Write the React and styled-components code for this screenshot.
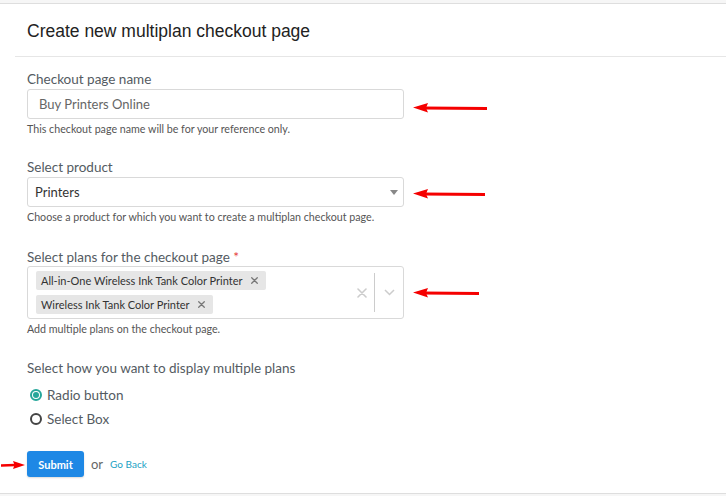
import React from 'react';
import styled, { createGlobalStyle } from 'styled-components';

const GlobalStyle = createGlobalStyle`
    html, body {
        margin: 0;
        padding: 0;
        background: #f6f6f6;
    }
    * { box-sizing: border-box; }
`;

const RedArrow = ({ width = 74 }) => (
    <svg width={width} height="12" viewBox={`0 0 ${width} 12`}>
        <line x1="10" y1="6" x2={width} y2="6.6" stroke="#f50000" strokeWidth="3" />
        <polygon points="0,5.5 15,1 13,6 15,10.5" fill="#f50000" />
    </svg>
);

const Caret = () => (
    <svg width="8" height="5" viewBox="0 0 8 5">
        <polygon points="0,0 8,0 4,5" fill="#888" />
    </svg>
);

const Cross = ({ size = 8, color = '#ccc', width = 1.6 }) => (
    <svg width={size} height={size} viewBox="0 0 10 10">
        <path d="M1 1 L9 9 M9 1 L1 9" stroke={color} strokeWidth={width} strokeLinecap="round" />
    </svg>
);

const Chevron = () => (
    <svg width="11" height="7" viewBox="0 0 11 7">
        <path d="M1 1 L5.5 5.5 L10 1" stroke="#ccc" strokeWidth="1.5" fill="none" />
    </svg>
);

export default function App() {
    return (
        <Page>
            <GlobalStyle />
            <Card>
                <Header>
                    <Title>Create new multiplan checkout page</Title>
                </Header>
                <Body>
                    <Field space={24}>
                        <Label>Checkout page name</Label>
                        <Row>
                            <Input>Buy Printers Online</Input>
                            <ArrowSlot offset={4}><RedArrow width={74} /></ArrowSlot>
                        </Row>
                        <Help>This checkout page name will be for your reference only.</Help>
                    </Field>

                    <Field space={26}>
                        <Label>Select product</Label>
                        <Row>
                            <Select>
                                <span>Printers</span>
                                <Caret />
                            </Select>
                            <ArrowSlot offset={2}><RedArrow width={72} /></ArrowSlot>
                        </Row>
                        <Help>Choose a product for which you want to create a multiplan checkout page.</Help>
                    </Field>

                    <Field space={25}>
                        <Label tight>Select plans for the checkout page <Required>*</Required></Label>
                        <Row>
                            <Multi>
                                <Tags>
                                    <Tag>All-in-One Wireless Ink Tank Color Printer <Cross size={7} color="#777" width={1.8} /></Tag>
                                    <Tag>Wireless Ink Tank Color Printer <Cross size={7} color="#777" width={1.8} /></Tag>
                                </Tags>
                                <Controls>
                                    <ClearBtn><Cross size={10} /></ClearBtn>
                                    <Divider />
                                    <ChevronBtn><Chevron /></ChevronBtn>
                                </Controls>
                            </Multi>
                            <ArrowSlot offset={0}><RedArrow width={66} /></ArrowSlot>
                        </Row>
                        <Help>Add multiple plans on the checkout page.</Help>
                    </Field>

                    <Field space={0}>
                        <Label>Select how you want to display multiple plans</Label>
                        <Radios>
                            <RadioRow>
                                <Radio checked />
                                Radio button
                            </RadioRow>
                            <RadioRow>
                                <Radio />
                                Select Box
                            </RadioRow>
                        </Radios>
                    </Field>

                    <Actions>
                        <SubmitWrap>
                            <SmallArrow>
                                <svg width="24" height="10" viewBox="0 0 24 10">
                                    <line x1="0" y1="5.5" x2="14" y2="5" stroke="#f50000" strokeWidth="2.4" />
                                    <polygon points="24,5 12,1 13.5,5 12,9" fill="#f50000" />
                                </svg>
                            </SmallArrow>
                            <SubmitButton>Submit</SubmitButton>
                        </SubmitWrap>
                        <Or>or</Or>
                        <BackLink>Go Back</BackLink>
                    </Actions>
                </Body>
            </Card>
        </Page>
    );
}

const Page = styled.div`
    padding-top: 3px;
    height: 496px;
    overflow: hidden;
    font-family: Lato, "Open Sans", sans-serif;
`

const Card = styled.div`
    background: #fff;
    border-top: 1px solid #dedede;
    border-bottom: 1px solid #dedede;
    height: 491px;
`

const Header = styled.div`
    height: 53px;
    margin-left: 15px;
    padding: 2px 0 0 12px;
    display: flex;
    align-items: center;
    border-bottom: 1px solid #e6e6e6;
`

const Title = styled.h1`
    margin: 0;
    font-family: "Liberation Sans", Arial, sans-serif;
    font-weight: 400;
    font-size: 17.5px;
    color: #222;
`

const Body = styled.div`
    padding: 14px 0 0 27px;
`

const Field = styled.div`
    margin-bottom: ${props => props.space}px;
`

const Label = styled.div`
    font-size: 13.5px;
    line-height: 16px;
    color: #545b62;
    margin-bottom: ${props => (props.tight ? 1 : 2)}px;
`

const Required = styled.span`
    color: #e53935;
`

const Row = styled.div`
    display: flex;
    align-items: center;
`

const ArrowSlot = styled.div`
    margin-left: 9px;
    display: flex;
    transform: translateY(${props => props.offset}px);
`

const boxBase = `
    width: 377px;
    border: 1px solid #d9d9d9;
    border-radius: 3px;
    background: #fff;
`

const Input = styled.div`
    ${boxBase}
    height: 30px;
    padding: 0 11px;
    display: flex;
    align-items: center;
    font-size: 13px;
    color: #666;
`

const Select = styled.div`
    ${boxBase}
    height: 30px;
    padding: 0 5px 0 7px;
    display: flex;
    align-items: center;
    justify-content: space-between;
    font-size: 13px;
    color: #333;
`

const Multi = styled.div`
    ${boxBase}
    min-height: 53px;
    display: flex;
    align-items: center;
`

const Tags = styled.div`
    flex: 1;
    display: flex;
    flex-wrap: wrap;
    gap: 5px;
    padding: 3px 0 4px 8px;
`

const Tag = styled.div`
    height: 19px;
    display: flex;
    align-items: center;
    gap: 8px;
    padding: 0 8px 0 5px;
    background: #e6e6e6;
    border-radius: 2px;
    font-size: 11px;
    color: #333;
`

const Controls = styled.div`
    display: flex;
    align-items: center;
    align-self: stretch;
    padding: 6px 0;
`

const ClearBtn = styled.div`
    width: 26px;
    display: flex;
    justify-content: center;
    padding-left: 2px;
`

const Divider = styled.div`
    width: 1px;
    align-self: stretch;
    background: #ccc;
`

const ChevronBtn = styled.div`
    width: 28px;
    display: flex;
    justify-content: center;
`

const Help = styled.div`
    margin-top: 4px;
    font-size: 10.7px;
    line-height: 12px;
    color: #555;
`

const Radios = styled.div`
    margin-top: 9px;
    display: flex;
    flex-direction: column;
    gap: 4px;
`

const RadioRow = styled.label`
    height: 20px;
    display: flex;
    align-items: center;
    gap: 5px;
    padding-left: 3px;
    font-size: 13.5px;
    color: #545b62;
`

const Radio = styled.span`
    width: 12px;
    height: 12px;
    border-radius: 50%;
    border: 2px solid ${props => (props.checked ? '#26a69a' : '#444')};
    display: flex;
    align-items: center;
    justify-content: center;
    &::after {
        content: '';
        width: 6px;
        height: 6px;
        border-radius: 50%;
        background: ${props => (props.checked ? '#26a69a' : 'transparent')};
    }
`

const Actions = styled.div`
    margin-top: 22px;
    display: flex;
    align-items: center;
`

const SubmitWrap = styled.div`
    position: relative;
`

const SmallArrow = styled.div`
    position: absolute;
    left: -26px;
    top: 9px;
    display: flex;
`

const SubmitButton = styled.button`
    width: 57px;
    height: 26px;
    border: none;
    border-radius: 3px;
    background: #1e88e5;
    color: #fff;
    font-family: Lato, sans-serif;
    font-weight: 700;
    font-size: 11px;
    box-shadow: 0 1px 2px rgba(0, 0, 0, 0.15);
    padding: 0;
`

const Or = styled.span`
    margin-left: 7px;
    font-size: 13px;
    color: #666;
`

const BackLink = styled.a`
    margin-left: 7px;
    font-size: 10px;
    color: #1a9fc4;
    cursor: pointer;
`
